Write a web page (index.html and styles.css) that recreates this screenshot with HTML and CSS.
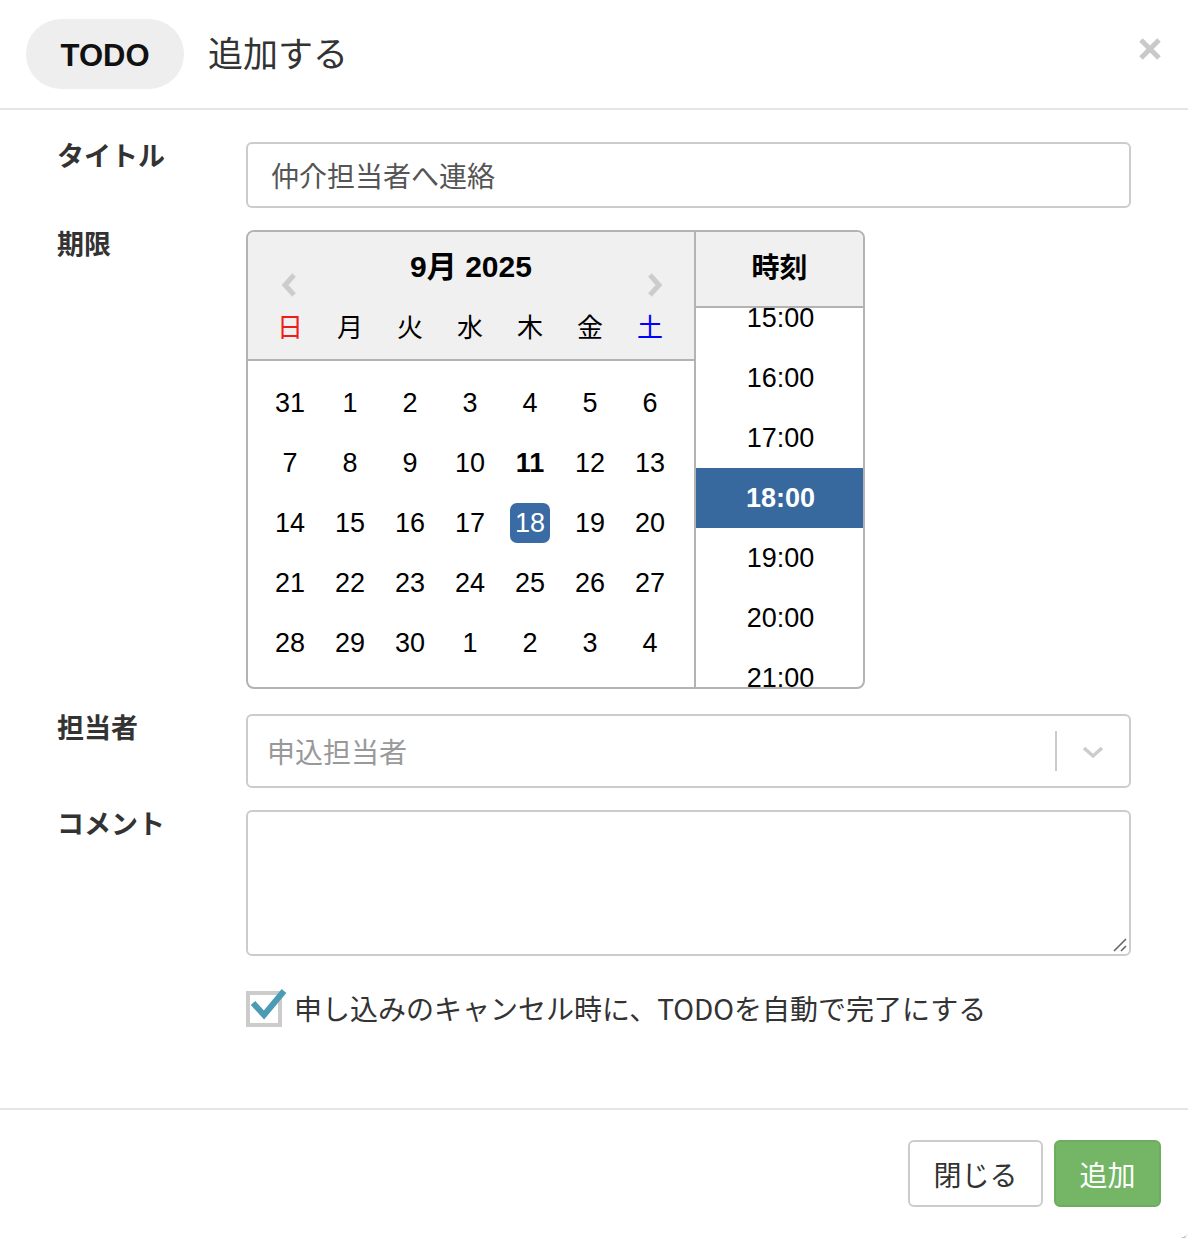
FILE: index.html
```html
<!DOCTYPE html>
<html lang="ja">
<head>
<meta charset="utf-8">
<title>TODO 追加する</title>
<link rel="stylesheet" href="styles.css">
</head>
<body>
<div class="modal">
  <div class="modal-header">
    <span class="pill">TODO</span>
    <span class="modal-title">追加する</span>
    <span class="close" aria-label="閉じる">
      <svg width="24" height="24" viewBox="0 0 24 24"><path d="M3 3 L21 21 M21 3 L3 21" stroke="#c9c9c9" stroke-width="5" stroke-linecap="butt"/></svg>
    </span>
  </div>
  <div class="modal-body">
    <div class="row">
      <div class="label">タイトル</div>
      <div class="field"><div class="input">仲介担当者へ連絡</div></div>
    </div>
    <div class="row row-date">
      <div class="label">期限</div>
      <div class="field">
        <div class="picker">
          <div class="cal">
            <div class="cal-head">
              <div class="month-row">
                <span class="nav nav-prev">
                  <svg width="18" height="26" viewBox="0 0 18 26"><path d="M14 3 L5 13 L14 23" fill="none" stroke="#cccccc" stroke-width="5"/></svg>
                </span>
                <span class="month">9月 2025</span>
                <span class="nav nav-next">
                  <svg width="18" height="26" viewBox="0 0 18 26"><path d="M4 3 L13 13 L4 23" fill="none" stroke="#cccccc" stroke-width="5"/></svg>
                </span>
              </div>
              <div class="week">
                <span class="sun">日</span><span>月</span><span>火</span><span>水</span><span>木</span><span>金</span><span class="sat">土</span>
              </div>
            </div>
            <div class="days">
              <span>31</span><span>1</span><span>2</span><span>3</span><span>4</span><span>5</span><span>6</span>
              <span>7</span><span>8</span><span>9</span><span>10</span><span class="today">11</span><span>12</span><span>13</span>
              <span>14</span><span>15</span><span>16</span><span>17</span><span><b class="sel">18</b></span><span>19</span><span>20</span>
              <span>21</span><span>22</span><span>23</span><span>24</span><span>25</span><span>26</span><span>27</span>
              <span>28</span><span>29</span><span>30</span><span>1</span><span>2</span><span>3</span><span>4</span>
            </div>
          </div>
          <div class="time">
            <div class="time-head">時刻</div>
            <div class="time-list">
              <ul>
                <li>15:00</li>
                <li>16:00</li>
                <li>17:00</li>
                <li class="active">18:00</li>
                <li>19:00</li>
                <li>20:00</li>
                <li>21:00</li>
              </ul>
            </div>
          </div>
        </div>
      </div>
    </div>
    <div class="row">
      <div class="label">担当者</div>
      <div class="field">
        <div class="select">
          <span class="placeholder">申込担当者</span>
          <span class="sep"></span>
          <span class="chev">
            <svg width="22" height="14" viewBox="0 0 22 14"><path d="M2 3 L11 11 L20 3" fill="none" stroke="#cccccc" stroke-width="3.5"/></svg>
          </span>
        </div>
      </div>
    </div>
    <div class="row row-comment">
      <div class="label">コメント</div>
      <div class="field">
        <div class="textarea">
          <svg class="grip" width="16" height="16" viewBox="0 0 16 16"><path d="M14 2 L2 14 M14 9 L9 14" stroke="#666" stroke-width="1.6"/></svg>
        </div>
      </div>
    </div>
    <div class="row row-check">
      <div class="label"></div>
      <div class="field check-field">
        <span class="checkbox">
          <svg width="40" height="40" viewBox="0 0 40 40"><path d="M5 16 L16 28 L36 4" fill="none" stroke="#4b9bb5" stroke-width="6"/></svg>
        </span>
        <span class="check-text">申し込みのキャンセル時に、TODOを自動で完了にする</span>
      </div>
    </div>
  </div>
  <div class="modal-footer">
    <span class="btn btn-default">閉じる</span>
    <span class="btn btn-success">追加</span>
  </div>
</div>
</body>
</html>
```

FILE: styles.css
```css
* { box-sizing: border-box; }
html, body { margin: 0; padding: 0; background: #ffffff; }
body {
  font-family: "Noto Sans CJK JP", "Noto Sans", sans-serif;
  color: #333;
}
.modal {
  width: 1188px;
  height: 1238px;
  background: #fff;
  border-radius: 0 0 8px 0;
  box-shadow: 0 4px 2px -2px rgba(0,0,0,0.45);
  display: flex;
  flex-direction: column;
}
.modal-header {
  height: 110px;
  border-bottom: 2px solid #e5e5e5;
  display: flex;
  align-items: center;
  padding: 0 28px 0 26px;
}
.pill {
  width: 158px;
  height: 70px;
  border-radius: 35px;
  background: #eeeeee;
  display: flex;
  align-items: center;
  justify-content: center;
  font-family: "Liberation Sans", Arial, sans-serif;
  font-weight: bold;
  font-size: 31px;
  color: #111;
  padding-top: 4px;
}
.modal-title {
  margin-left: 24px;
  font-size: 35px;
  color: #333;
  flex: 1;
  line-height: 1;
  margin-bottom: 6px;
}
.close {
  display: flex;
  margin-top: -10px;
  margin-right: -2px;
}
.modal-body {
  flex: 1;
  padding: 32px 57px 0 57px;
}
.row {
  display: flex;
  margin-bottom: 22px;
}
.row-date { margin-bottom: 25px; }
.row-check { margin-top: 34px; }
.label {
  width: 189px;
  flex: none;
  font-size: 27px;
  line-height: 26px;
  font-weight: bold;
  color: #333;
}
.field { width: 886px; }
.input {
  height: 66px;
  border: 2px solid #cccccc;
  border-radius: 6px;
  padding-left: 23px;
  display: flex;
  align-items: center;
  font-size: 28px;
  color: #555;
}
.picker {
  display: flex;
  width: 619px;
  height: 459px;
  border: 2px solid #b3b3b3;
  border-radius: 8px;
  overflow: hidden;
  font-family: "Liberation Sans", Arial, "Noto Sans CJK JP", sans-serif;
  color: #000;
}
.cal {
  width: 448px;
  border-right: 2px solid #b3b3b3;
  flex: none;
}
.cal-head {
  background: #f0f0f0;
  border-bottom: 2px solid #b3b3b3;
  height: 129px;
  padding: 13px 12px 0 12px;
}
.month-row {
  display: grid;
  grid-template-columns: 1fr auto 1fr;
  align-items: start;
  padding: 0 20px 0 20px;
  height: 61px;
}
.nav { margin-top: 27px; display: flex; }
.nav-prev { justify-self: start; }
.nav-next { justify-self: end; margin-right: -2px; }
.month {
  font-weight: bold;
  font-size: 30px;
  line-height: 44px;
}
.week {
  display: grid;
  grid-template-columns: repeat(7, 60px);
  font-family: "Noto Sans CJK JP", sans-serif;
  font-size: 26px;
  text-align: center;
  line-height: 40px;
}
.week .sun { color: #f21b1b; }
.week .sat { color: #0000ff; }
.days {
  display: grid;
  grid-template-columns: repeat(7, 60px);
  grid-auto-rows: 60px;
  padding: 12px 12px 0 12px;
  font-size: 27px;
  text-align: center;
}
.days span {
  display: flex;
  align-items: center;
  justify-content: center;
}
.days .today { font-weight: bold; }
.sel {
  width: 40px;
  height: 40px;
  border-radius: 7px;
  background: #3a6ba4;
  color: #fff;
  font-weight: normal;
  display: flex;
  align-items: center;
  justify-content: center;
}
.time {
  flex: 1;
  display: flex;
  flex-direction: column;
}
.time-head {
  height: 76px;
  background: #f0f0f0;
  border-bottom: 2px solid #b3b3b3;
  font-family: "Noto Sans CJK JP", sans-serif;
  font-weight: bold;
  font-size: 28px;
  display: flex;
  align-items: center;
  justify-content: center;
  padding-bottom: 6px;
}
.time-list {
  flex: 1;
  overflow: hidden;
}
.time-list ul {
  list-style: none;
  margin: -20px 0 0 0;
  padding: 0;
}
.time-list li {
  height: 60px;
  display: flex;
  align-items: center;
  justify-content: center;
  font-size: 27px;
  padding-left: 2px;
}
.time-list li.active {
  background: #37699f;
  color: #fff;
  font-weight: bold;
}
.select {
  height: 74px;
  border: 2px solid #cccccc;
  border-radius: 6px;
  display: flex;
  align-items: center;
  padding-left: 19px;
}
.placeholder {
  flex: 1;
  font-size: 28px;
  color: #999;
}
.sep {
  width: 2px;
  height: 40px;
  background: #cccccc;
}
.chev {
  width: 72px;
  display: flex;
  justify-content: center;
  padding-top: 2px;
}
.textarea {
  height: 146px;
  border: 2px solid #cccccc;
  border-radius: 6px;
  position: relative;
}
.grip {
  position: absolute;
  right: 1px;
  bottom: 1px;
}
.check-field {
  display: flex;
  align-items: center;
}
.checkbox {
  width: 36px;
  height: 36px;
  border: 4px solid #cccccc;
  position: relative;
  flex: none;
}
.checkbox svg {
  position: absolute;
  left: -2px;
  top: -8px;
}
.check-text {
  margin-left: 12px;
  font-size: 28px;
  color: #333;
  margin-top: -2px;
}
.modal-footer {
  height: 130px;
  border-top: 2px solid #e5e5e5;
  display: flex;
  justify-content: flex-end;
  align-items: flex-start;
  padding: 30px 27px 0 0;
  gap: 11px;
}
.btn {
  height: 67px;
  border-radius: 6px;
  display: flex;
  align-items: center;
  justify-content: center;
  font-size: 28px;
}
.btn-default {
  width: 135px;
  border: 2px solid #cccccc;
  color: #333;
  background: #fff;
}
.btn-success {
  width: 107px;
  background: #74b566;
  border: 2px solid #6cae5e;
  color: #fff;
}
```
